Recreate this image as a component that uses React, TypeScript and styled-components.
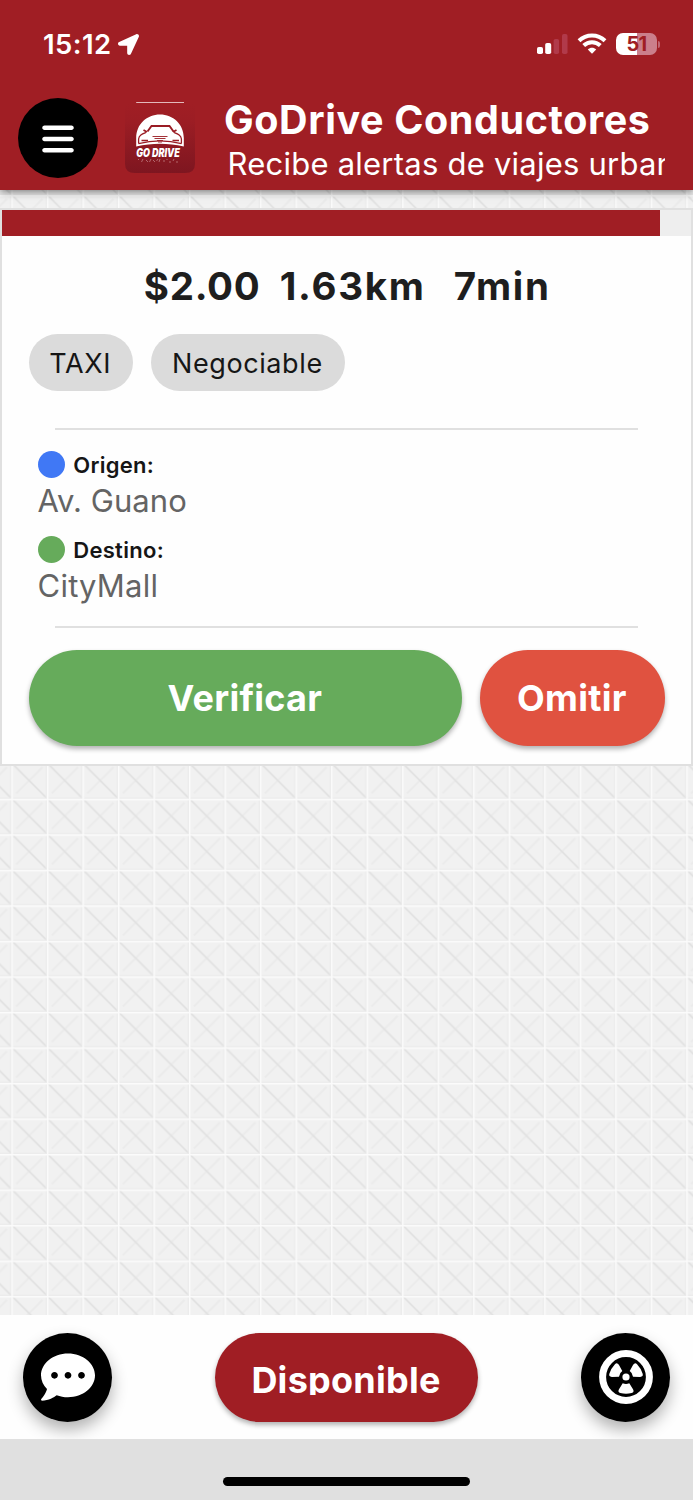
import React from "react";
import styled, { createGlobalStyle } from "styled-components";
import { FaBars } from "react-icons/fa6";
import { FaCommentDots, FaLocationArrow } from "react-icons/fa";

const RED = "#a01e24";
const GREEN = "#66ab5b";
const ORANGE = "#e05240";

const GlobalStyle = createGlobalStyle`
  * { box-sizing: border-box; }
  body { margin: 0; background: #f1f1f1; }
  body, button { font-family: Inter, "Liberation Sans", sans-serif; }
  button { border: 0; padding: 0; }
  svg { display: block; }
`;

const Screen = styled.div`
  position: relative;
  isolation: isolate;
  display: flex;
  flex-direction: column;
  width: 693px;
  height: 1500px;
  overflow: hidden;
`;

const Backdrop = styled.svg`
  position: absolute;
  inset: 0;
  z-index: -1;
`;

const Header = styled.header`
  height: 190px;
  padding-top: 24px;
  background: ${RED};
  color: #fff;
  box-shadow: 0 2px 8px rgba(0, 0, 0, 0.5);
`;

const StatusBar = styled.div`
  display: flex;
  align-items: center;
  height: 40px;
  padding: 0 33px 0 43px;
`;

const Clock = styled.span`
  width: 75px;
  font-size: 27.5px;
  font-weight: 600;
  line-height: 40px;
  letter-spacing: 0.4px;
  white-space: nowrap;
`;

const StatusIcons = styled.div`
  display: flex;
  align-items: center;
  gap: 9px;
  margin-left: auto;
`;

const Battery = styled.div`
  position: relative;
  width: 41px;
  height: 22px;
  margin-right: 3px;
  border-radius: 7px;
  background: linear-gradient(90deg, #fff 52%, #cb7f8b 52%);
  color: ${RED};
  font-size: 20px;
  font-weight: 700;
  line-height: 22px;
  letter-spacing: -0.6px;
  text-align: center;

  &::after {
    content: "";
    position: absolute;
    left: 42px;
    top: 8px;
    width: 2px;
    height: 7px;
    border-radius: 0 3px 3px 0;
    background: #c06673;
  }
`;

const AppBar = styled.div`
  display: flex;
  padding: 33px 28.5px 0 18px;
`;

const MenuButton = styled.button`
  display: flex;
  align-items: center;
  justify-content: center;
  width: 80px;
  height: 80px;
  margin-top: 1px;
  padding: 2px 1px 0 0;
  border-radius: 50%;
  background: #000;
  color: #fff;
`;

const Logo = styled.svg`
  flex: none;
  margin: 5px 0 0 27px;
`;

const Titles = styled.div`
  flex: 1;
  min-width: 0;
  margin: 1px 0 0 29px;
`;

const Title = styled.h1`
  margin: 0;
  font-size: 39.5px;
  font-weight: 700;
  line-height: 44px;
  letter-spacing: 0.6px;
  white-space: nowrap;
`;

const Subtitle = styled.p`
  margin: 3px 0 0;
  padding-left: 3.5px;
  overflow: hidden;
  font-size: 31px;
  line-height: 38px;
  letter-spacing: 0.23px;
  white-space: nowrap;
`;

const Card = styled.section`
  height: 558px;
  margin-top: 18px;
  border: 2px solid #e0e0e0;
  background: #fefefe;
`;

const Progress = styled.div`
  height: 26.4px;
  background: #eee;
`;

const ProgressFill = styled.div`
  height: 100%;
  background: ${RED};
`;

const Body = styled.div`
  padding: 27px 26px 0 26.6px;
`;

const Metrics = styled.div`
  display: flex;
  padding-left: 115.2px;
  height: 46px;
`;

const Metric = styled.strong<{ $width: number; $spacing: number }>`
  width: ${(p) => p.$width}px;
  color: #1e1e1e;
  font-size: 38.5px;
  font-weight: 700;
  line-height: 46px;
  letter-spacing: ${(p) => p.$spacing}px;
  white-space: nowrap;
`;

const Chips = styled.div`
  display: flex;
  gap: 18px;
  margin-top: 24.8px;
`;

const Chip = styled.span<{ $width: number }>`
  width: ${(p) => p.$width}px;
  height: 57px;
  padding-right: 1.5px;
  border-radius: 29px;
  background: #dbdbdb;
  color: #161616;
  font-size: 27px;
  line-height: 59px;
  letter-spacing: 0.6px;
  text-align: center;
`;

const Divider = styled.hr<{ $top: number }>`
  height: 2px;
  margin: ${(p) => p.$top}px 27px 0 26px;
  border: 0;
  background: #e0e0e0;
`;

const Stop = styled.div<{ $top: number }>`
  margin-top: ${(p) => p.$top}px;
  padding-left: 9px;
`;

const StopLabel = styled.div`
  display: flex;
  align-items: center;
  gap: 8.6px;
  height: 27px;
  color: #161616;
  font-size: 22px;
  font-weight: 600;
  line-height: 28px;
  letter-spacing: 0.3px;
`;

const Dot = styled.i<{ $color: string }>`
  width: 27px;
  height: 27px;
  border-radius: 50%;
  background: ${(p) => p.$color};
`;

const Address = styled.div<{ $spacing: number }>`
  height: 36px;
  margin-top: 4.5px;
  color: #646464;
  font-size: 31px;
  font-weight: 400;
  line-height: 35px;
  letter-spacing: ${(p) => p.$spacing}px;
`;

const Actions = styled.div`
  display: flex;
  gap: 18px;
  margin-top: 21.8px;
`;

const Pill = styled.button<{ $color: string; $width: number; $height: number }>`
  width: ${(p) => p.$width}px;
  height: ${(p) => p.$height}px;
  padding-right: 1px;
  border-radius: 48px;
  background: ${(p) => p.$color};
  box-shadow: 0 3px 5px rgba(0, 0, 0, 0.3);
  color: #fff;
  font-size: 36px;
  font-weight: 700;
  line-height: ${(p) => p.$height}px;
  letter-spacing: 0.25px;
`;

const Footer = styled.footer`
  display: flex;
  justify-content: space-between;
  height: 124.4px;
  margin-top: auto;
  padding: 18px 23px 0;
  background: #fefefe;
`;

const RoundButton = styled.button`
  display: flex;
  align-items: center;
  justify-content: center;
  width: 89px;
  height: 89px;
  padding-bottom: 1px;
  border-radius: 50%;
  background: #000;
  color: #fff;
  box-shadow: 0 8px 16px rgba(0, 0, 0, 0.3);
`;

const ClippedLabel = styled.span`
  display: block;
  height: 35px;
  overflow: hidden;
  line-height: 41px;
`;

const HomeArea = styled.div`
  display: flex;
  justify-content: center;
  height: 60.6px;
  padding-top: 37.5px;
  background: #e0e0e0;
`;

const HomeIndicator = styled.div`
  width: 247px;
  height: 9px;
  border-radius: 5px;
  background: #000;
`;

function TileBackdrop() {
  return (
    <Backdrop width="693" height="1500">
      <defs>
        <pattern id="tile" x="11.4" y="798.8" width="35.52" height="35.52" patternUnits="userSpaceOnUse">
          <rect width="36" height="36" fill="#f1f1f1" />
          <path d="M5 30L31 4" stroke="#ebebeb" strokeWidth="2" />
          <path d="M0 -.5L36 35.5" stroke="#e2e2e2" strokeWidth="1.900" />
          <path d="M34.8 0V36M0 34.8H36" stroke="#ebebeb" strokeWidth="1" />
          <path d="M.7 0V36M0 .7H36" stroke="#fbfbfb" strokeWidth="1.5" />
        </pattern>
      </defs>
      <rect width="693" height="1500" fill="url(#tile)" />
    </Backdrop>
  );
}

function Signal() {
  return (
    <svg width="31" height="22" viewBox="0 0 31 22" fill="#fff">
      <rect x="0" y="14" width="6" height="7" rx="1.8" />
      <rect x="8.2" y="10" width="6" height="11" rx="1.8" />
      <rect x="16.6" y="6" width="5.500" height="15" rx="1.8" fill="#b13a4a" />
      <rect x="25" y="1" width="5.500" height="20" rx="1.8" fill="#b13a4a" />
    </svg>
  );
}

function Wifi() {
  return (
    <svg width="30" height="22" viewBox="0 0 30 22" fill="none" stroke="#fff" strokeWidth="4">
      <path d="M2 7.700C9.300 .6 20.700 .6 28 7.700" />
      <path d="M6.700 12.500C11.400 8 18.600 8 23.300 12.500" />
      <path d="M15 20.700L10.800 16.500C13.200 14.300 16.800 14.300 19.200 16.500Z" fill="#fff" stroke="none" />
    </svg>
  );
}

function Radiation() {
  const blade = "M-3.300 6.200Q0 7.800 3.300 6.200L7 12.300Q8.600 15.300 5.600 16Q0 17.400-5.600 16Q-8.600 15.300-7 12.300Z";
  return (
    <svg width="54" height="54" viewBox="-27 -27 54 54" fill="#fff">
      <circle r="23.400" fill="none" stroke="#fff" strokeWidth="7" />
      <circle r="3.600" />
      {[0, 120, 240].map((angle) => (
        <path key={angle} d={blade} transform={`rotate(${angle})`} />
      ))}
    </svg>
  );
}

function AppLogo() {
  return (
    <Logo width="70" height="73" viewBox="0 0 70 73">
      <defs>
        <linearGradient id="shade" x1="0" y1="0" x2="0" y2="1">
          <stop offset="0" stopColor="#a01e24" />
          <stop offset="0.25" stopColor="#9c1d24" />
          <stop offset="1" stopColor="#7e1620" />
        </linearGradient>
      </defs>
      <path d="M0 2H70V62Q70 71 60 71H10Q0 71 0 62Z" fill="url(#shade)" />
      <path d="M11.200 .5H59" stroke="#e3b9bb" strokeWidth="1" />
      <path d="M11.200 44.500V36C11.200 22 22 12.500 35 12.500S58.800 22 58.800 36V44.500C43 40.800 27 40.800 11.200 44.500Z" fill="#fff" />
      <g stroke="#9a1c24" fill="none">
        <path d="M22.500 29.500L26.500 24H44.500L48.500 29.500" strokeWidth="1.900" />
        <path d="M21 30.500C17 32 14 33 13.600 37V41.500M49 30.500C53 32 56 33 56.400 37V41.500" strokeWidth="1.300" />
        <path d="M18.500 28L22 30M51.500 28L48 30" strokeWidth="1.800" />
        <path d="M13.500 41.600C27 38.200 43 38.200 56.500 41.600" strokeWidth="1.200" />
        <path d="M16.500 38.500H23M47.500 38.500H54" strokeWidth="1.500" />
        <path d="M27.500 34.500H42.500M29.500 36.500H40.500M32 38.500H38M33 40H37" strokeWidth="0.900" />
      </g>
      <text
        x="11.300"
        y="55"
        textLength="43.500"
        lengthAdjust="spacingAndGlyphs"
        fill="#fff"
        fontFamily="Inter, sans-serif"
        fontSize="11.500"
        fontStyle="italic"
        fontWeight="900"
      >
        GO DRIVE
      </text>
      <path
        d="M13 57L14 58M18 57L16.500 60M21 58L23 60M26 57L24.500 60M28 58L30 60M33 57L31.500 59M35 57L34 60M38 59H40M42 57V58M44 60H46M49 57L48 59M51 60H53"
        stroke="#c58a8e"
        strokeWidth="0.700"
      />
    </Logo>
  );
}

export default function App() {
  return (
    <Screen>
      <GlobalStyle />
      <TileBackdrop />
      <Header>
        <StatusBar>
          <Clock>15:12</Clock>
          <FaLocationArrow size={21} />
          <StatusIcons>
            <Signal />
            <Wifi />
            <Battery>51</Battery>
          </StatusIcons>
        </StatusBar>
        <AppBar>
          <MenuButton aria-label="Menú">
            <FaBars size={36} />
          </MenuButton>
          <AppLogo />
          <Titles>
            <Title>GoDrive Conductores</Title>
            <Subtitle>Recibe alertas de viajes urbanos</Subtitle>
          </Titles>
        </AppBar>
      </Header>
      <Card>
        <Progress>
          <ProgressFill style={{ width: "95.55%" }} />
        </Progress>
        <Body>
          <Metrics>
            <Metric $width={136} $spacing={0.7}>$2.00</Metric>
            <Metric $width={174} $spacing={1.7}>1.63km</Metric>
            <Metric $width={110} $spacing={1.7}>7min</Metric>
          </Metrics>
          <Chips>
            <Chip $width={104.5}>TAXI</Chip>
            <Chip $width={194}>Negociable</Chip>
          </Chips>
          <Divider $top={36.5} />
          <Stop $top={21.5}>
            <StopLabel>
              <Dot $color="#4078f5" />
              Origen:
            </StopLabel>
            <Address $spacing={0.05}>Av. Guano</Address>
          </Stop>
          <Stop $top={17.5}>
            <StopLabel>
              <Dot $color={GREEN} />
              Destino:
            </StopLabel>
            <Address $spacing={0.2}>CityMall</Address>
          </Stop>
          <Divider $top={22.5} />
          <Actions>
            <Pill $color={GREEN} $width={433.5} $height={96}>
              Verificar
            </Pill>
            <Pill $color={ORANGE} $width={184.5} $height={96}>
              Omitir
            </Pill>
          </Actions>
        </Body>
      </Card>
      <Footer>
        <RoundButton aria-label="Mensajes">
          <FaCommentDots size={54} />
        </RoundButton>
        <Pill $color={RED} $width={263} $height={89}>
          <ClippedLabel>Disponible</ClippedLabel>
        </Pill>
        <RoundButton aria-label="Alerta">
          <Radiation />
        </RoundButton>
      </Footer>
      <HomeArea>
        <HomeIndicator />
      </HomeArea>
    </Screen>
  );
}
